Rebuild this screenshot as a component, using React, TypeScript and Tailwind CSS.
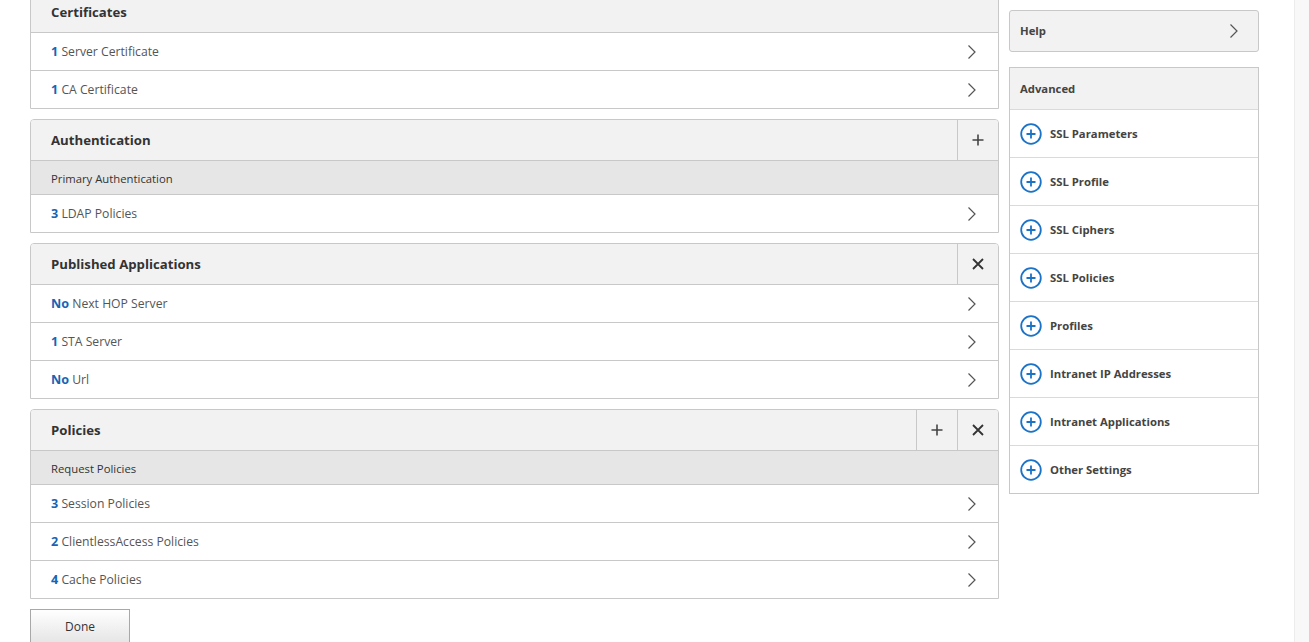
import React from "react";

const ChevronRight = () => (
  <svg width="10" height="16" viewBox="0 0 10 16" className="shrink-0">
    <path d="M1.5 1.5 L8 8 L1.5 14.5" fill="none" stroke="#555" strokeWidth="1.2" />
  </svg>
);

const PlusIcon = () => (
  <svg width="12" height="12" viewBox="0 0 12 12">
    <path d="M6 0.5 V11.5 M0.5 6 H11.5" stroke="#444" strokeWidth="1.6" />
  </svg>
);

const CloseIcon = () => (
  <svg width="12" height="12" viewBox="0 0 12 12">
    <path d="M1 1 L11 11 M11 1 L1 11" stroke="#333" strokeWidth="1.8" />
  </svg>
);

const CirclePlus = () => (
  <svg width="22" height="22" viewBox="0 0 22 22" className="shrink-0">
    <circle cx="11" cy="11" r="9.8" fill="none" stroke="#1a73c6" strokeWidth="1.8" />
    <path d="M11 6.5 V15.5 M6.5 11 H15.5" stroke="#1a73c6" strokeWidth="1.8" />
  </svg>
);

type Row = { count: string; label: string };

const ItemRow = ({ count, label }: Row) => (
  <div className="flex items-center justify-between h-[38px] pl-5 pr-[21px] border-t border-[#c8c8c8] bg-white">
    <span className="text-[12.2px] text-[#555] pt-[1px]">
      <span className="font-bold text-[#1565b5] text-[12.6px]">{count}</span> {label}
    </span>
    <ChevronRight />
  </div>
);

const Panel = ({
  title,
  sub,
  rows,
  plus,
  close,
}: {
  title: string;
  sub?: string;
  rows: Row[];
  plus?: boolean;
  close?: boolean;
}) => (
  <div className="shrink-0 border border-[#c8c8c8] rounded-t-[4px] overflow-hidden">
    <div className="flex h-[40px] bg-[#f2f2f2]">
      <div className="flex-1 flex items-center pl-5 pt-[1px] text-[13.2px] font-bold text-[#333]">{title}</div>
      {plus && (
        <div className="w-[41px] flex items-center justify-center border-l border-[#c8c8c8]">
          <PlusIcon />
        </div>
      )}
      {close && (
        <div className="w-[41px] flex items-center justify-center border-l border-[#c8c8c8]">
          <CloseIcon />
        </div>
      )}
    </div>
    {sub && (
      <div className="h-[34px] flex items-center pl-5 pt-[3px] border-t border-[#c8c8c8] bg-[#e6e6e6] text-[11.3px] text-[#333]">
        {sub}
      </div>
    )}
    {rows.map((r) => (
      <ItemRow key={r.label} {...r} />
    ))}
  </div>
);

const advanced = [
  "SSL Parameters",
  "SSL Profile",
  "SSL Ciphers",
  "SSL Policies",
  "Profiles",
  "Intranet IP Addresses",
  "Intranet Applications",
  "Other Settings",
];

export default function App() {
  return (
    <div
      className="h-[642px] overflow-hidden bg-white flex"
      style={{ fontFamily: '"Open Sans", "Noto Sans", sans-serif' }}
    >
      <div className="flex flex-1 pl-[30px]">
        <div className="w-[969px] flex flex-col gap-[10px] -mt-[9px]">
          <Panel
            title="Certificates"
            rows={[
              { count: "1", label: "Server Certificate" },
              { count: "1", label: "CA Certificate" },
            ]}
          />
          <Panel
            title="Authentication"
            sub="Primary Authentication"
            plus
            rows={[{ count: "3", label: "LDAP Policies" }]}
          />
          <Panel
            title="Published Applications"
            close
            rows={[
              { count: "No", label: "Next HOP Server" },
              { count: "1", label: "STA Server" },
              { count: "No", label: "Url" },
            ]}
          />
          <Panel
            title="Policies"
            sub="Request Policies"
            plus
            close
            rows={[
              { count: "3", label: "Session Policies" },
              { count: "2", label: "ClientlessAccess Policies" },
              { count: "4", label: "Cache Policies" },
            ]}
          />
          <div className="shrink-0">
            <button className="w-[100px] h-[36px] border border-[#a8a8a8] bg-gradient-to-b from-white to-[#e4e4e4] text-[12px] text-[#333]">
              Done
            </button>
          </div>
        </div>

        <div className="w-[250px] ml-[10px] pt-[10px] flex flex-col gap-[15px]">
          <div className="h-[42px] flex items-center justify-between pl-[10px] pr-[19px] border border-[#c8c8c8] rounded-[3px] bg-[#f2f2f2]">
            <span className="text-[11.3px] font-bold text-[#444] pt-[1px]">Help</span>
            <ChevronRight />
          </div>
          <div className="border border-[#c8c8c8]">
            <div className="h-[41px] flex items-center pl-[10px] pt-[1px] bg-[#f2f2f2] text-[11.3px] font-bold text-[#444]">
              Advanced
            </div>
            {advanced.map((a) => (
              <div
                key={a}
                className="h-[48px] flex items-center gap-2 pl-[10px] border-t border-[#dadada] bg-white"
              >
                <CirclePlus />
                <span className="text-[11.3px] font-bold text-[#444] pt-[1px]">{a}</span>
              </div>
            ))}
          </div>
        </div>
      </div>
      <div className="w-[15px] bg-[#f8f8f8] border-l border-[#ececec]" />
    </div>
  );
}
